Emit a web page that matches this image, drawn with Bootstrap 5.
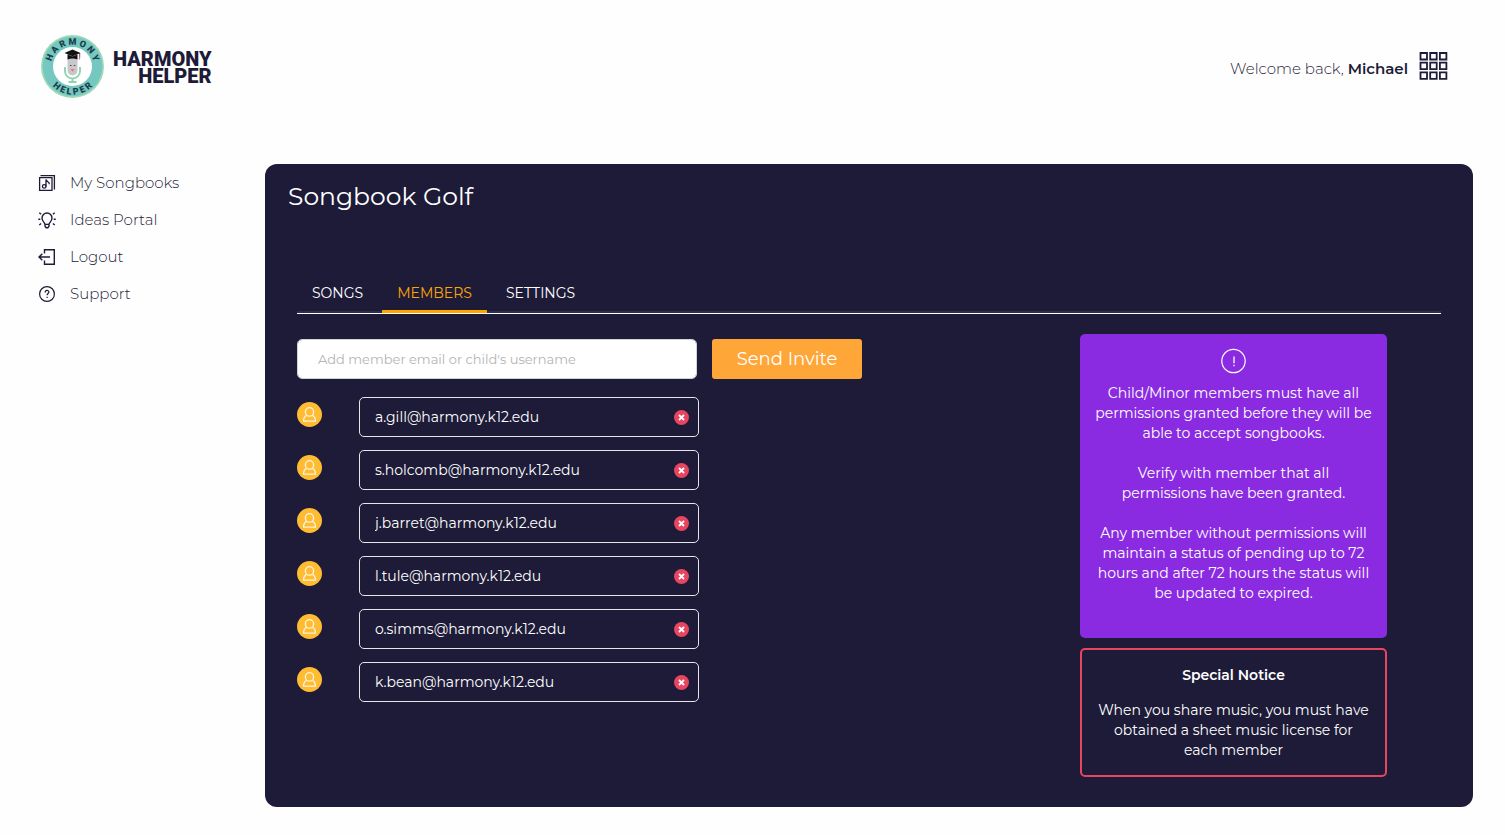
<!DOCTYPE html>
<html lang="en">
<head>
<meta charset="utf-8">
<meta name="viewport" content="width=device-width, initial-scale=1">
<title>Harmony Helper – Songbook Golf</title>
<link href="https://cdn.jsdelivr.net/npm/bootstrap@5.3.0/dist/css/bootstrap.min.css" rel="stylesheet">
<style>
  :root { --navy: #1d1b38; --amber: #ffa500; }
  body { font-family: Montserrat, Inter, sans-serif; font-size: 15px; line-height: 20px; color: var(--navy); background: #fefefe; }
  a { color: inherit; text-decoration: none; }
  .site-header { padding: 34px 55px 0 40px; }
  .wordmark { font-family: Roboto, sans-serif; font-size: 20px; font-weight: 900; line-height: 17px; text-align: right; padding-top: 2px; }
  .seal { width: 65px; height: 65px; }
  .seal text { font-family: Roboto, sans-serif; font-weight: 900; font-size: 9px; }
  .light { font-weight: 300; }
  .welcome { padding-top: 4px; }
  .page-body { padding: 65px 32px 28px 38px; }
  .side-menu { width: 227px; padding-top: 9px; gap: 17px; font-weight: 300; }
  .side-menu a { gap: 14px; }
  .side-menu svg { width: 18px; height: 18px; }
  .panel { background: var(--navy); color: #fff; border-radius: 12px; padding: 16px 32px 30px; font-size: 14px; }
  .panel h1 { font-size: 25px; line-height: 32px; font-weight: 400; margin: 0 0 67px -9px; }
  .tabs { border-bottom: 1px solid #fff; box-shadow: inset 0 -2px #2f2d4e; gap: 4px; }
  .tabs .nav-link { color: #fff; padding: 4px 15px 7px; height: 34px; border-bottom: 3px solid transparent; }
  .tabs .nav-link.active { color: var(--amber); border-color: var(--amber); }
  .manage { padding-top: 25px; }
  .invite { gap: 15px; margin-bottom: 18px; }
  .invite .form-control { width: 400px; height: 40px; border-radius: 5px; padding: 0 20px; font-size: 13px; border-color: #ced4da; }
  .invite .form-control::placeholder { color: #b4b4b4; }
  .btn-invite, .btn-invite:hover { width: 150px; height: 40px; padding: 0; border: 0; border-radius: 3px; background: #fea638; color: #fff; font-size: 18px; }
  .members { gap: 13px; }
  .members li { gap: 37px; }
  .avatar { width: 25px; height: 25px; margin-top: 5px; }
  .member-box { width: 340px; }
  .member-box .form-control { height: 40px; background: transparent; color: #fff; border: 1px solid #e6e6ea; border-radius: 5px; padding: 0 40px 0 15px; font-size: 14px; }
  .btn-remove { right: 10px; top: 13px; }
  .btn-remove svg { width: 15px; height: 15px; }
  .aside-col { width: 307px; margin-right: 54px; gap: 10px; padding-top: 20px; text-align: center; }
  .info { background: #8a2be2; border-radius: 5px; padding: 14px 13px 35px; }
  .info svg { width: 26px; height: 26px; margin-bottom: 9px; }
  .info p + p { margin-top: 20px; }
  .notice { border: 2px solid #e84560; border-radius: 5px; padding: 15px 10px; }
  .notice h2 { font-size: 14px; line-height: 20px; font-weight: 600; margin-bottom: 15px; }
</style>
</head>
<body>
<svg class="d-none" aria-hidden="true">
  <symbol id="person" viewBox="0 0 25 25">
    <circle cx="12.5" cy="12.5" r="12.5" fill="#ffbc33"/>
    <g fill="none" stroke="#fff4dc" stroke-width="1.3" stroke-linejoin="round">
      <ellipse cx="12.5" cy="9.9" rx="4.1" ry="4.3"/>
      <path d="M9.6 13.3C7.4 14.3 6.5 16.4 6.5 19.2H18.5C18.5 16.4 17.6 14.3 15.4 13.3"/>
    </g>
  </symbol>
  <symbol id="remove" viewBox="0 0 15 15">
    <circle cx="7.5" cy="7.5" r="7.5" fill="#e84560"/>
    <path d="M5 5l5 5M10 5l-5 5" stroke="#fff" stroke-width="1.8"/>
  </symbol>
</svg>

<header class="site-header d-flex justify-content-between align-items-center">
  <a href="#" class="d-flex align-items-center">
    <svg class="seal" viewBox="0 0 65 65" aria-hidden="true">
      <defs>
        <path id="arcTop" d="M10.8 32.5A21.7 21.7 0 0 1 54.2 32.5"/>
        <path id="arcBottom" d="M4.5 32.5A28 28 0 0 0 60.5 32.5"/>
      </defs>
      <circle cx="32.5" cy="32.5" r="31.5" fill="#9fd8b8"/>
      <circle cx="32.5" cy="32.5" r="29.8" fill="#74c8bf"/>
      <circle cx="32.5" cy="32.5" r="19.5" fill="#fff"/>
      <g fill="#1d3c4c" text-anchor="middle">
        <text><textPath href="#arcTop" startOffset="50%">H A R M O N Y</textPath></text>
        <text><textPath href="#arcBottom" startOffset="50%">H E L P E R</textPath></text>
      </g>
      <path d="M25 33v4a7.5 7.5 0 0 0 15 0V33M32.5 44.5V48M28.5 48h8" fill="none" stroke="#8fd3b0" stroke-width="1.9"/>
      <rect x="27.5" y="22" width="10" height="19.5" rx="5" fill="#c6c8cc"/>
      <path d="M30 31.5h1.5M33.8 31.5h1.5" stroke="#444" stroke-width="1.2"/>
      <path d="M30.3 35h4.4l-2.2 2.8z" fill="#ee7768"/>
      <path d="M24.5 19l8-3.5 8 3.5-8 3.2zM27.5 20.5l5 2 5-2v5q-5-2-10 0z" fill="#111"/>
      <path d="M39.7 19v4" stroke="#111" stroke-width=".7"/>
      <path d="M39.5 22.5v3" stroke="#e45cc0" stroke-width="1.2"/>
    </svg>
    <span class="wordmark ms-2"><span class="d-block">HARMONY</span><span class="d-block">HELPER</span></span>
  </a>
  <div class="d-flex align-items-center">
    <span class="welcome light">Welcome back, <b class="fw-semibold">Michael</b></span>
    <button type="button" class="btn p-0 border-0 d-flex ms-2" aria-label="Apps menu">
      <svg width="34" height="32" viewBox="0 0 34 32" fill="none" stroke="#1d1b38" stroke-width="1.8">
        <path d="M4.5 2H11v6.5H4.5zM14.2 2h6.5v6.5h-6.5zM23.9 2h6.5v6.5h-6.5zM4.5 11.7H11v6.5H4.5zM14.2 11.7h6.5v6.5h-6.5zM23.9 11.7h6.5v6.5h-6.5zM4.5 21.4H11v6.5H4.5zM14.2 21.4h6.5v6.5h-6.5zM23.9 21.4h6.5v6.5h-6.5z"/>
      </svg>
    </button>
  </div>
</header>

<div class="page-body d-flex align-items-start">
  <nav class="side-menu d-flex flex-column flex-shrink-0" aria-label="Main">
    <a href="#" class="d-flex align-items-center">
      <svg viewBox="0 0 18 18" fill="none" stroke="#1d1b38" stroke-width="1.3">
        <path d="M1.6 3.7h12.4v12.7H1.6zM2.5 1.6h13.9V15.5M8 12.4V5.4c.3 2.2 3.4 2 3.4 4.8"/><circle cx="6.2" cy="12.4" r="1.8"/>
      </svg>My Songbooks</a>
    <a href="#" class="d-flex align-items-center">
      <svg viewBox="0 0 18 18" fill="none" stroke="#1d1b38" stroke-width="1.4">
        <path d="M7 13.4C7 11.7 4 10.6 4 7a5 5 0 0 1 10 0c0 3.6-3 4.7-3 6.4zM7 13.4v1.8l1.2 1.5h1.6l1.2-1.5v-1.8M.3 8.3h2M15.7 8.3h2M1.3 1.7l1.8 1.5M16.7 1.7l-1.8 1.5M1.3 14l1.8-1.5M16.7 14l-1.8-1.5"/>
      </svg>Ideas Portal</a>
    <a href="#" class="d-flex align-items-center">
      <svg viewBox="0 0 18 18" fill="none" stroke="#1d1b38" stroke-width="1.4">
        <path d="M6.5 5.5V1.7h9.8v14.6H6.5v-3.8M12 9H1.2M4.3 5.7L1 9l3.3 3.3"/>
      </svg>Logout</a>
    <a href="#" class="d-flex align-items-center">
      <svg viewBox="0 0 18 18" fill="none" stroke="#1d1b38" stroke-width="1.2">
        <circle cx="9" cy="9" r="7.4"/><path d="M7.2 7.4c0-2.7 3.7-2.5 3.7-.3 0 1.5-1.8 1.4-1.8 3.2M9.1 11.7v1.4"/>
      </svg>Support</a>
  </nav>

  <main class="panel flex-grow-1">
    <h1>Songbook Golf</h1>
    <nav class="tabs nav">
      <a class="nav-link" href="#">SONGS</a>
      <a class="nav-link active" href="#" aria-current="page">MEMBERS</a>
      <a class="nav-link" href="#">SETTINGS</a>
    </nav>
    <div class="d-flex justify-content-between align-items-start">
      <section class="manage">
        <form class="invite d-flex">
          <input class="form-control" id="invitee" type="text" aria-label="Member email or username" placeholder="Add member email or child's username">
          <button class="btn btn-invite" type="button">Send Invite</button>
        </form>
        <ul class="members list-unstyled d-flex flex-column mb-0">
          <li class="d-flex"><svg class="avatar"><use href="#person"/></svg><div class="member-box position-relative"><input class="form-control" aria-label="Member 1" value="a.gill@harmony.k12.edu" readonly><button class="btn btn-remove position-absolute p-0 border-0 d-flex" type="button" aria-label="Remove member 1"><svg><use href="#remove"/></svg></button></div></li>
          <li class="d-flex"><svg class="avatar"><use href="#person"/></svg><div class="member-box position-relative"><input class="form-control" aria-label="Member 2" value="s.holcomb@harmony.k12.edu" readonly><button class="btn btn-remove position-absolute p-0 border-0 d-flex" type="button" aria-label="Remove member 2"><svg><use href="#remove"/></svg></button></div></li>
          <li class="d-flex"><svg class="avatar"><use href="#person"/></svg><div class="member-box position-relative"><input class="form-control" aria-label="Member 3" value="j.barret@harmony.k12.edu" readonly><button class="btn btn-remove position-absolute p-0 border-0 d-flex" type="button" aria-label="Remove member 3"><svg><use href="#remove"/></svg></button></div></li>
          <li class="d-flex"><svg class="avatar"><use href="#person"/></svg><div class="member-box position-relative"><input class="form-control" aria-label="Member 4" value="l.tule@harmony.k12.edu" readonly><button class="btn btn-remove position-absolute p-0 border-0 d-flex" type="button" aria-label="Remove member 4"><svg><use href="#remove"/></svg></button></div></li>
          <li class="d-flex"><svg class="avatar"><use href="#person"/></svg><div class="member-box position-relative"><input class="form-control" aria-label="Member 5" value="o.simms@harmony.k12.edu" readonly><button class="btn btn-remove position-absolute p-0 border-0 d-flex" type="button" aria-label="Remove member 5"><svg><use href="#remove"/></svg></button></div></li>
          <li class="d-flex"><svg class="avatar"><use href="#person"/></svg><div class="member-box position-relative"><input class="form-control" aria-label="Member 6" value="k.bean@harmony.k12.edu" readonly><button class="btn btn-remove position-absolute p-0 border-0 d-flex" type="button" aria-label="Remove member 6"><svg><use href="#remove"/></svg></button></div></li>
        </ul>
      </section>
      <aside class="aside-col d-flex flex-column flex-shrink-0">
        <div class="info">
          <svg class="d-block mx-auto" viewBox="0 0 26 26" fill="none" stroke="#fff" stroke-width="1.2"><circle cx="12.5" cy="13" r="11.7"/><path d="M13 8.5v6.7M13 16.8v1.5" stroke-width="1.3"/></svg>
          <p class="mb-0">Child/Minor members must have all permissions granted before they will be able to accept songbooks.</p>
          <p class="mb-0">Verify with member that all<br>permissions have been granted.</p>
          <p class="mb-0">Any member without permissions will maintain a status of pending up to 72 hours and after 72 hours the status will be updated to expired.</p>
        </div>
        <div class="notice">
          <h2>Special Notice</h2>
          <p class="mb-0">When you share music, you must have obtained a sheet music license for<br>each member</p>
        </div>
      </aside>
    </div>
  </main>
</div>
<script src="https://cdn.jsdelivr.net/npm/bootstrap@5.3.0/dist/js/bootstrap.bundle.min.js"></script>
</body>
</html>
